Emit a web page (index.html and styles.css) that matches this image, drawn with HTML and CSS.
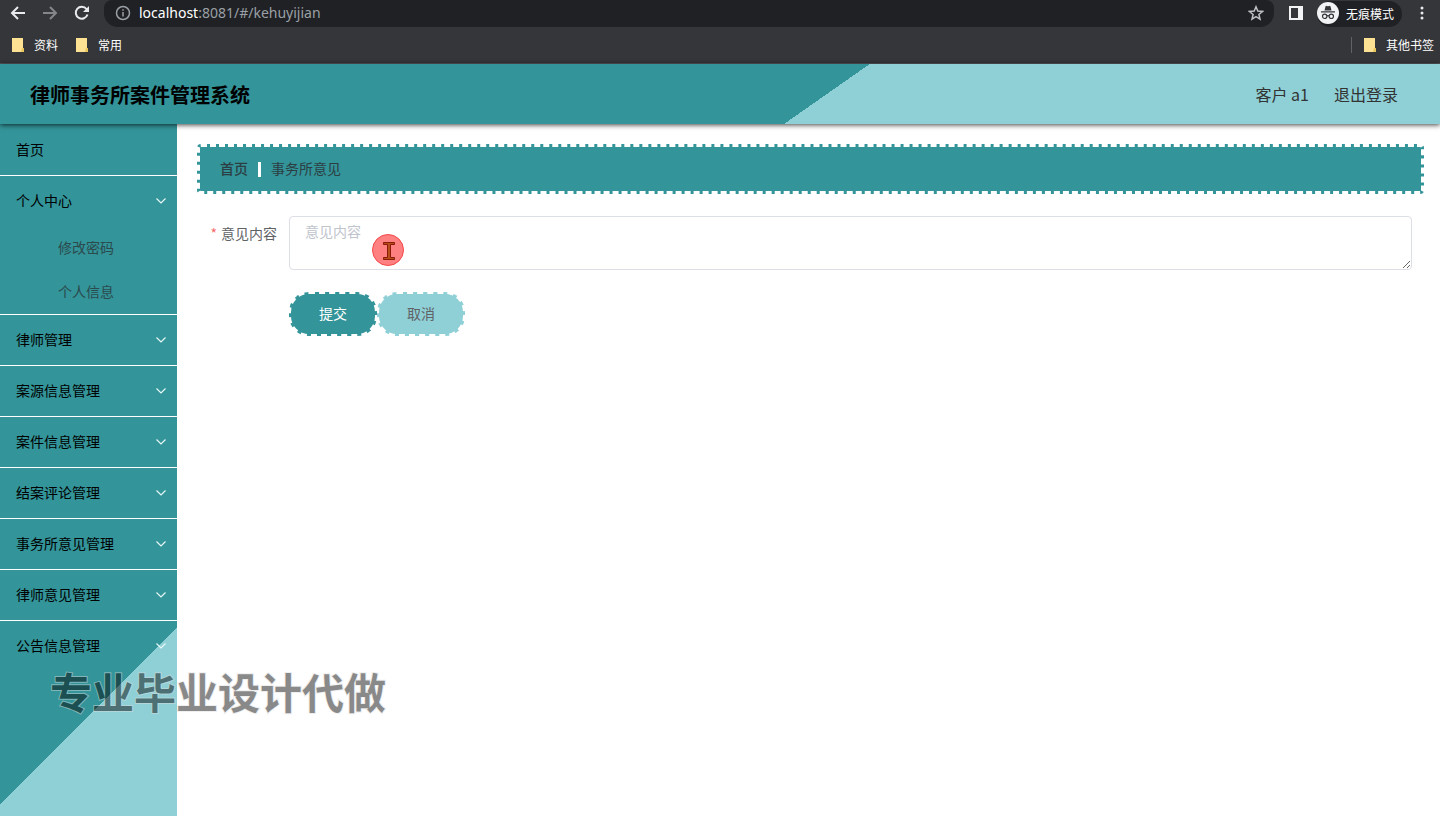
FILE: index.html
```html
<!doctype html>
<html lang="zh">
<head>
<meta charset="utf-8">
<title>律师事务所案件管理系统</title>
<meta name="viewport" content="width=device-width,initial-scale=1">
<link rel="stylesheet" href="styles.css">
</head>
<body>
<div class="browser">
  <div class="toolbar">
    <button class="tool back" aria-label="后退"><svg width="16" height="16" viewBox="0 0 16 16"><path d="M15 8H2M8 2L2 8l6 6"/></svg></button>
    <button class="tool forward" aria-label="前进"><svg width="16" height="16" viewBox="0 0 16 16"><path d="M1 8h13M8 2l6 6-6 6"/></svg></button>
    <button class="tool reload" aria-label="刷新"><svg width="16" height="16" viewBox="0 0 16 16"><path d="M13.5 9.5A6 6 0 1 1 12.5 4L14 5.5"/><path class="solid" d="M15 1v6H9z"/></svg></button>
    <div class="address">
      <svg class="info" width="16" height="16" viewBox="0 0 16 16"><circle cx="8" cy="8" r="6.5"/><path d="M8 7v4.5M8 4.2v1.6"/></svg>
      <span class="url"><b>localhost</b>:8081/#/kehuyijian</span>
      <button class="star" aria-label="收藏"><svg width="16" height="16" viewBox="0 0 16 16"><path d="M8 1.8l1.8 4.3 4.7.4-3.6 3 1.1 4.6L8 11.6l-4 2.5 1.1-4.6-3.6-3 4.7-.4z"/></svg></button>
    </div>
    <button class="panel" aria-label="侧边栏"><svg width="14" height="14" viewBox="0 0 14 14"><path fill="#f1f3f4" fill-rule="evenodd" d="M0 0h14v14H0zM2 2v10h7V2z"/></svg></button>
    <button class="incognito">
      <svg width="22" height="22" viewBox="0 0 22 22"><circle cx="11" cy="11" r="11" fill="#f1f3f4"/><path fill="#35363a" d="M7.5 8.5l1-4q.2-.8 1-.6l1.5.4 1.5-.4q.8-.2 1 .6l1 4zM4 9.2h14v1.3H4z"/><g fill="none" stroke="#35363a" stroke-width="1.2"><circle cx="7.7" cy="14.3" r="2.2"/><circle cx="14.3" cy="14.3" r="2.2"/><path d="M9.9 14q1.1-.7 2.2 0"/></g></svg>
      无痕模式
    </button>
    <button class="more" aria-label="更多"><svg width="4" height="14" viewBox="0 0 4 14" fill="#e8eaed"><circle cx="2" cy="2" r="1.5"/><circle cx="2" cy="7" r="1.5"/><circle cx="2" cy="12" r="1.5"/></svg></button>
  </div>
  <div class="bookmarks">
    <a href="#"><svg width="12" height="14" viewBox="0 0 12 14"><path fill="#fde293" d="M0 0h11v10h1v4H0z"/><path fill="#e9c75b" d="M10 10h2v4h-3z"/></svg>资料</a>
    <a href="#"><svg width="12" height="14" viewBox="0 0 12 14"><path fill="#fde293" d="M0 0h11v10h1v4H0z"/><path fill="#e9c75b" d="M10 10h2v4h-3z"/></svg>常用</a>
    <a href="#" class="other"><svg width="12" height="14" viewBox="0 0 12 14"><path fill="#fde293" d="M0 0h11v10h1v4H0z"/><path fill="#e9c75b" d="M10 10h2v4h-3z"/></svg>其他书签</a>
  </div>
</div>

<header class="header">
  <h1>律师事务所案件管理系统</h1>
  <span class="user">客户 a1</span>
  <a href="#" class="logout">退出登录</a>
</header>

<div class="container">
  <nav class="sidebar">
    <ul class="menu">
      <li><a href="#">首页</a></li>
      <li>
        <a href="#">个人中心<svg class="arrow" width="10" height="6" viewBox="0 0 10 6"><path d="M.5.5L5 5 9.5.5"/></svg></a>
        <ul class="submenu">
          <li><a href="#">修改密码</a></li>
          <li><a href="#">个人信息</a></li>
        </ul>
      </li>
      <li><a href="#">律师管理<svg class="arrow" width="10" height="6" viewBox="0 0 10 6"><path d="M.5.5L5 5 9.5.5"/></svg></a></li>
      <li><a href="#">案源信息管理<svg class="arrow" width="10" height="6" viewBox="0 0 10 6"><path d="M.5.5L5 5 9.5.5"/></svg></a></li>
      <li><a href="#">案件信息管理<svg class="arrow" width="10" height="6" viewBox="0 0 10 6"><path d="M.5.5L5 5 9.5.5"/></svg></a></li>
      <li><a href="#">结案评论管理<svg class="arrow" width="10" height="6" viewBox="0 0 10 6"><path d="M.5.5L5 5 9.5.5"/></svg></a></li>
      <li><a href="#">事务所意见管理<svg class="arrow" width="10" height="6" viewBox="0 0 10 6"><path d="M.5.5L5 5 9.5.5"/></svg></a></li>
      <li><a href="#">律师意见管理<svg class="arrow" width="10" height="6" viewBox="0 0 10 6"><path d="M.5.5L5 5 9.5.5"/></svg></a></li>
      <li><a href="#">公告信息管理<svg class="arrow" width="10" height="6" viewBox="0 0 10 6"><path d="M.5.5L5 5 9.5.5"/></svg></a></li>
    </ul>
  </nav>

  <main class="main">
    <div class="breadcrumb">
      <a href="#">首页</a><span class="sep"></span><span>事务所意见</span>
    </div>
    <form class="form">
      <div class="form-item">
        <label for="content">意见内容</label>
        <textarea id="content" placeholder="意见内容"></textarea>
      </div>
      <div class="actions">
        <button type="button" class="btn primary">提交</button>
        <button type="button" class="btn">取消</button>
      </div>
    </form>
  </main>
</div>

<div class="watermark">专业毕业设计代做</div>
<svg class="pointer" width="32" height="32" viewBox="0 0 32 32"><circle cx="16" cy="16" r="15.5" fill="#ff8080" stroke="#f4484c"/><path fill="#b8501c" stroke="#8a1a08" d="M11.5 8.500h11v2h-4v13h4v2h-11v-2h4v-13h-4z"/></svg>
</body>
</html>
```
FILE: styles.css
```css
:root{
  --teal:#339499;--light:#8ed0d6;--chrome:#35363a;--dark:#202124;
}
*{box-sizing:border-box;margin:0;padding:0}
body{min-height:100vh;display:flex;flex-direction:column;background:#fff;color:#000;font-family:"Noto Sans CJK SC",sans-serif;font-size:14px;line-height:20px}
a{color:inherit;text-decoration:none}
ul{list-style:none}
button{border:none;background:none;font-family:inherit;line-height:20px;color:inherit;cursor:pointer}
svg{display:block;flex:none}

/* 浏览器栏 */
.browser{height:64px;background:var(--chrome);border-bottom:1px solid #56575b;color:#fff;font-size:12px}
.toolbar{height:27px;display:flex;align-items:center}
.toolbar svg{margin-bottom:1px}
.tool{margin-left:10px;width:22px;display:flex;justify-content:center}
.back{margin-left:7px}
.tool svg,.star svg,.info{fill:none;stroke:#e8eaed;stroke-width:2}
.tool .solid{fill:#e8eaed;stroke:none}
.forward svg{stroke:#85868a}
.toolbar .info{stroke:#9aa0a6;stroke-width:1.5}
.address{flex:1;height:27px;margin-left:11px;padding:0 10px 1px 11px;display:flex;align-items:center;background:var(--dark);border-radius:8px 8px 14px 14px}
.url{flex:1;margin-left:8px;font-family:"Noto Sans",sans-serif;font-size:14px;color:#9aa0a6}
.url b{font-weight:400;color:#fff}
.star svg{stroke:#bdc1c6;stroke-width:1.5}
.panel{margin-left:15px}
.incognito{height:26px;margin-left:14px;padding:0 8px 0 0;display:flex;align-items:center;gap:7px;background:var(--dark);border-radius:13px;font-size:12px}
.more{margin:0 16px 0 18px}
.bookmarks{height:36px;padding:0 6px 0 12px;display:flex;align-items:center;gap:18px}
.bookmarks a{display:flex;align-items:center;gap:10px}
.bookmarks .other{margin-left:auto;padding-left:12px;border-left:1px solid #5f6368;line-height:16px}

/* 顶部 */
.header{position:relative;height:60px;padding:0 42px 0 30px;display:flex;align-items:center;gap:25px;background:linear-gradient(145deg,var(--teal) 57%,var(--light) 57%);box-shadow:0 1px 5px rgb(0 0 0/.75);color:#333;font-size:16px}
.header h1{flex:1;padding-top:2px;font-size:20px;color:#000}

.container{flex:1;display:flex}
.sidebar{width:177px;padding-top:1px;background:linear-gradient(135deg,var(--teal) 78.3%,var(--light) 78.3%)}
.menu>li{border-bottom:1px solid #fff}
.menu>li:last-child{border-bottom:none}
.menu>li>a{height:50px;padding:0 11px 2px 16px;display:flex;align-items:center;justify-content:space-between}
.arrow{margin-top:2px;fill:none;stroke:#e8f8f9;stroke-width:1.2}
.submenu a{height:44px;padding:0 0 2px 58px;display:flex;align-items:center;color:#2b4a4d}

.main{flex:1;padding:20px 16px 20px 20px}
.breadcrumb{height:50px;padding:0 20px 2px;display:flex;align-items:center;background:var(--teal);border:3px dashed #fff;border-radius:4px;color:#2c3e43}
.breadcrumb a{font-weight:500}
.sep{width:3px;height:15px;margin:2px 10px 0;background:#fff}

.form{padding:22px 12px 0}
.form-item{display:flex}
.form-item label{width:80px;padding-right:12px;line-height:34px;text-align:right;color:#606266}
.form-item label::before{content:"*";margin-right:4px;color:#f56c6c}
.form-item textarea{flex:1;height:54px;padding:4px 15px;border:1px solid #dcdfe6;border-radius:4px;font-family:inherit;font-size:14px;line-height:21px;color:#606266;resize:vertical}
.form-item textarea::placeholder{color:#c0c4cc}
.actions{margin:22px 0 0 80px;display:flex}
.btn{width:88px;height:44px;padding-bottom:2px;background:var(--light);border:2px dashed #fff;border-radius:20px;font-size:14px;color:#606266}
.btn.primary{background:var(--teal);color:#fff}

/* 浮层 */
.watermark{position:absolute;left:50px;top:660px;font-size:42px;line-height:62px;font-weight:700;color:#000;-webkit-text-stroke:2px #ddd;paint-order:stroke fill;opacity:.46;pointer-events:none}
.pointer{position:absolute;left:372px;top:234px;pointer-events:none}
```
